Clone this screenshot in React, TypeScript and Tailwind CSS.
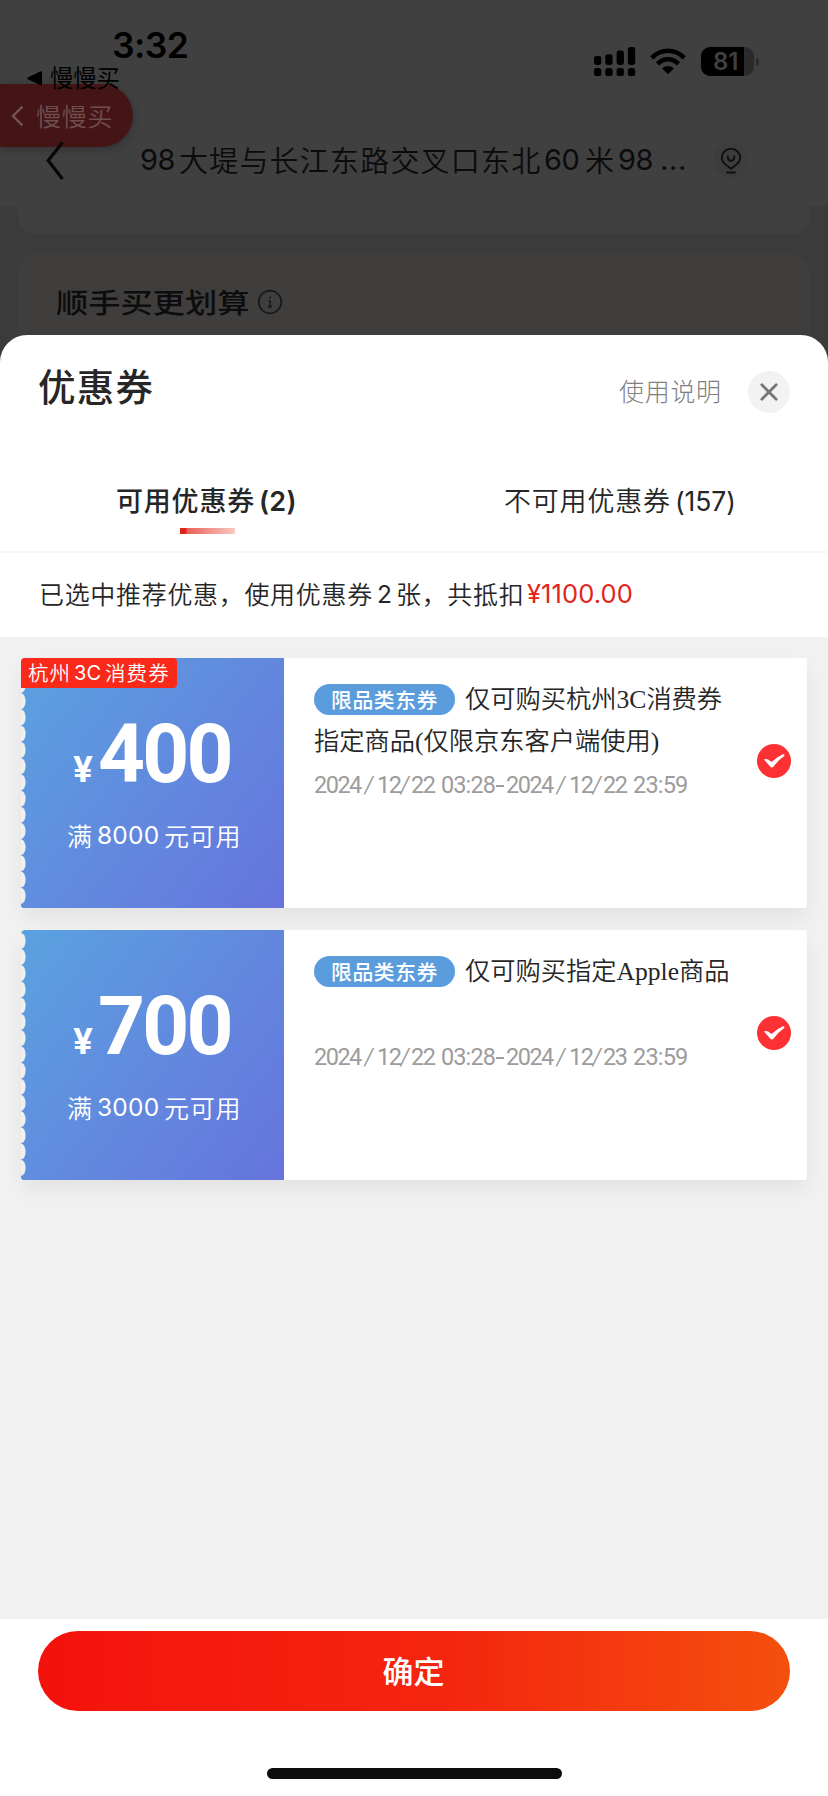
import React from "react";

const SANS = "font-['Noto_Sans_CJK_SC',sans-serif]";
const LATIN = "font-['Inter',sans-serif] leading-none";

function StatusBar() {
  return (
    <div className="flex h-[100px] justify-between text-black">
      <div className="flex flex-col">
        <div className="mt-[28px] ml-[112px] h-[36px] font-['Inter',sans-serif] text-[35.5px] leading-[36px] font-semibold tracking-[-0.6px]">
          3:32
        </div>
        <div className="relative z-20 ml-[27px] flex h-[26px] items-center">
          <svg width="15" height="15" viewBox="0 0 15 15" className="mt-[2px]">
            <path d="M0.8 6.6 13 0.4Q15 -0.2 15 1.6V13Q15 14.8 13.2 14L0.8 8.2Q-0.2 7.4 0.8 6.6Z" fill="#000" />
          </svg>
          <span className="ml-[8px] text-[23.3px] leading-[24px] whitespace-nowrap">慢慢买</span>
        </div>
      </div>
      <div className="mt-[47px] mr-[69px] flex h-[30px] items-start">
        <svg width="42" height="30" viewBox="0 0 42 30" fill="#000">
          <rect x="0" y="9" width="7.3" height="9" rx="2.4" />
          <rect x="11.3" y="7.2" width="7.3" height="10.8" rx="2.4" />
          <rect x="22.6" y="3.6" width="7.3" height="14.4" rx="2.4" />
          <rect x="33.9" y="0" width="7.3" height="18" rx="2.4" />
          <rect x="0" y="21" width="7.3" height="8" rx="2.6" />
          <rect x="11.3" y="21" width="7.3" height="8" rx="2.6" />
          <rect x="22.6" y="21" width="7.3" height="8" rx="2.6" />
          <rect x="33.9" y="21" width="7.3" height="8" rx="2.6" />
        </svg>
        <svg width="36" height="28" viewBox="0 0 36 28" className="ml-[14px]" fill="none" stroke="#000" strokeWidth="4.6">
          <path d="M1.8 10.8C11 1.4 25 1.4 34.2 10.8" />
          <path d="M7.6 16.8C13.6 10.8 22.4 10.8 28.4 16.8" />
          <path d="M12.2 21.4C15.6 18.2 20.4 18.2 23.8 21.4L19 26.2Q18 27.2 17 26.2Z" fill="#000" stroke="none" />
        </svg>
        <div className="ml-[15px] flex h-[29px] items-center">
          <div className="flex h-[29px] w-[53px] items-center overflow-hidden rounded-[9px] bg-[linear-gradient(90deg,#000_43px,#2b2b2b_43px)] pl-[12px]">
            <span className="font-['Inter',sans-serif] text-[24px] leading-[29px] font-semibold text-[#404040]">81</span>
          </div>
          <div className="ml-[2px] h-[8px] w-[3px] rounded-r-full bg-[#2b2b2b]" />
        </div>
      </div>
    </div>
  );
}

function AddressBar() {
  return (
    <div className="flex h-[106px] items-start">
      <svg width="19" height="40" viewBox="0 0 19 40" className="relative z-20 mt-[41px] ml-[46px]" fill="none" stroke="#070707" strokeWidth="3.2">
        <path d="M16.5 1.5 2.2 19.5 16.5 38" />
      </svg>
      <div className="mt-[39px] ml-[75px] flex h-[40px] w-[570px] items-center text-[29px] leading-[40px] font-[350] tracking-[1.2px] whitespace-nowrap text-[#0b0b0d]">
        <span className={`${LATIN} w-[39px] text-[29px] font-normal tracking-[-0.6px]`}>98</span>
        <span className="w-[363px]">大堤与长江东路交叉口东北</span>
        <span className={`${LATIN} w-[43px] pl-[2px] text-[29px] font-normal tracking-[-0.4px]`}>60</span>
        <span className="w-[33px]">米</span>
        <span className={`${LATIN} w-[42px] text-[29px] font-normal tracking-[-0.4px]`}>98</span>
        <span className={`${LATIN} text-[29px] font-normal tracking-[0.6px]`}>...</span>
      </div>
      <div className="mt-[43px] ml-[3px] flex size-[35px] items-center justify-center rounded-full bg-[#3d3d3d]">
        <svg width="22" height="26" viewBox="0 0 22 26" fill="none" stroke="#101010" strokeWidth="2">
          <path d="M11 20.6C8 18.2 1.8 15.6 1.8 10a9.2 9.2 0 0 1 18.4 0C20.2 15.6 14 18.2 11 20.6Z" />
          <path d="M7.8 7.6v2a3.2 3.2 0 0 0 6.4 0V7.6M6.4 24.6h9.2" />
        </svg>
      </div>
    </div>
  );
}

function Backdrop() {
  return (
    <div className="relative h-[375px] shrink-0 bg-[#3b3b3b]">
      <div className="h-[206px] bg-[#404040]">
        <StatusBar />
        <AddressBar />
      </div>
      <div className="mx-[18px] h-[28px] rounded-b-[18px] bg-[#404040]" />
      <div className="mx-[18px] mt-[20px] h-[121px] rounded-t-[18px] bg-[#403d3d] pt-[27px] pl-[38px]">
        <div className="flex h-[40px] items-center">
          <span className="w-[194px]">
            <span className="inline-block origin-left scale-x-[1.16] text-[27.8px] leading-[40px] font-medium whitespace-nowrap text-[#0d0d0d]">
              顺手买更划算
            </span>
          </span>
          <svg width="26" height="26" viewBox="0 0 26 26" className="mt-[2px] ml-[7px]" fill="none" stroke="#181818" strokeWidth="1.7">
            <circle cx="13" cy="13" r="11.3" />
            <path d="M13 7.4v2.2M11.4 12h1.8v5.2M11 17.6h4" strokeWidth="1.6" />
          </svg>
        </div>
      </div>
      <div className="absolute top-[84px] left-0 z-10 flex h-[63px] w-[133px] items-center rounded-r-full bg-[#451516] shadow-[0_2px_8px_rgba(0,0,0,0.25)]">
        <svg width="13" height="22" viewBox="0 0 13 22" className="ml-[11px]" fill="none" stroke="#755454" strokeWidth="2.4">
          <path d="M11.5 1.5 2 11l9.5 9.5" />
        </svg>
        <span className="mb-[2px] ml-[12px] text-[25px] leading-[36px] font-[350] tracking-[0.7px] whitespace-nowrap text-[#6f4e4e]">慢慢买</span>
      </div>
    </div>
  );
}

const scallops = Array.from({ length: 15 }, (_, i) => 10.8 + i * 16.22);

interface Coupon {
  tag?: React.ReactNode;
  amount: string;
  threshold: string;
  title: React.ReactNode;
  end: string;
}

function Serif({ children }: { children: React.ReactNode }) {
  return <span className="font-['Liberation_Serif',serif] text-[25.6px] leading-none font-normal">{children}</span>;
}

function DateText({ end }: { end: string }) {
  return (
    <div className="flex h-[24px] items-center font-['Roboto',sans-serif] text-[23.5px] leading-[24px] font-normal tracking-[-1.5px] whitespace-pre text-[#9c9c9c]">
      <span className="w-[49px]">2024</span>
      <span className="w-[14px] origin-left scale-x-[1.3] font-light">/</span>
      <span className="w-[22px]">12</span>
      <span className="w-[12px] origin-left scale-x-[1.3] font-light">/</span>
      <span className="w-[30px]">22</span>
      <span className="w-[55px] tracking-[-0.9px]">03:28</span>
      <span className="w-[10px]">
        <span className="inline-block w-[8px] border-t-2 border-[#9c9c9c] align-middle" />
      </span>
      <span className="w-[49px]">2024</span>
      <span className="w-[14px] origin-left scale-x-[1.3] font-light">/</span>
      <span className="w-[22px]">12</span>
      <span className="w-[12px] origin-left scale-x-[1.3] font-light">/</span>
      <span className="w-[30px]">{end}</span>
      <span className="tracking-[-0.8px]">23:59</span>
    </div>
  );
}

function CouponCard({ tag, amount, threshold, title, end }: Coupon) {
  return (
    <div className="relative flex h-[250.5px] w-[786px] shrink-0 rounded-[3px] bg-white shadow-[0_10px_20px_rgba(0,0,0,0.06)]">
      <div className="relative flex w-[263px] flex-col items-center bg-[linear-gradient(128deg,#5aa2e0_0%,#6288de_55%,#6674dc_100%)] text-white">
        <svg width="5" height="251" viewBox="0 0 5 251" className="absolute top-0 left-0" fill="#f0f0f0">
          <path d="M0 0H3Q1 1 0 3ZM0 251H3Q1 250 0 248Z" />
          {scallops.map((cy) => (
            <ellipse key={cy} cx="0" cy={cy} rx="4.6" ry="7.9" />
          ))}
        </svg>
        {tag && (
          <div className="absolute top-0 left-0 flex h-[30px] w-[156px] items-center rounded-[4px] rounded-bl-none bg-[#fa2a1b] pb-[1px] pl-[7px] text-[20.5px] leading-[28px] font-[350] tracking-[1.1px] whitespace-nowrap">
            {tag}
          </div>
        )}
        <div className="mt-[55px] flex h-[82px] w-full items-baseline pl-[52px] font-['Roboto',sans-serif] leading-[82px] font-bold">
          <span className="w-[25px] font-['Inter',sans-serif] text-[35px] leading-none tracking-[-0.5px]">¥</span>
          <span className="text-[82px] tracking-[-2.8px]">{amount}</span>
        </div>
        <div className="mt-[22px] flex h-[36px] w-full items-center pl-[46px] text-[25px] leading-[36px] font-[350] tracking-[0.7px] whitespace-nowrap">
          <span className="w-[30px]">满</span>
          <span className={`${LATIN} mt-[2px] w-[67px] text-[24.5px] font-normal tracking-[0.2px]`}>{threshold}</span>
          <span>元可用</span>
        </div>
      </div>
      <div className="pt-[18px] pl-[30px]">
        <div className="h-[84px] w-[440px] text-[25.25px] leading-[42px] font-[350] whitespace-nowrap text-[#262626]">
          <span className="relative -top-[1px] mr-[10px] inline-flex h-[31px] w-[141px] items-center justify-center rounded-full bg-[#5b9ddc] pb-[1px] align-middle text-[20.8px] leading-[30px] font-medium tracking-[0.6px] text-white">
            限品类东券
          </span>
          {title}
        </div>
        <div className="mt-[13px]">
          <DateText end={end} />
        </div>
      </div>
      <svg width="34" height="34" viewBox="0 0 34 34" className="absolute top-[86px] left-[736px]">
        <circle cx="17" cy="17" r="17" fill="#fc3134" />
        <path d="M7 15.6Q9.2 14.2 11.4 15.8L14.6 18Q19.6 12.8 26 10.2Q28.2 10 27.2 12Q21.4 16 16.6 22.6Q14.9 24.4 13.2 22.6Z" fill="#fff" />
      </svg>
    </div>
  );
}

export default function App() {
  return (
    <div className={`flex h-[1796px] w-[828px] flex-col overflow-hidden bg-white ${SANS}`}>
      <Backdrop />
      <div className="relative z-30 -mt-[40px] flex grow flex-col overflow-hidden rounded-t-[27px] bg-white">
        <div className="flex h-[114px] shrink-0 items-start pl-[38px]">
          <h2 className="mt-[23px] w-[581px] text-[37.5px] leading-[54px] font-medium tracking-[1.2px] text-[#262626]">优惠券</h2>
          <span className="mt-[37px] w-[129px] text-[25px] leading-[36px] font-light tracking-[0.7px] whitespace-nowrap text-[#808080]">使用说明</span>
          <button className="mt-[36px] flex size-[42px] items-center justify-center rounded-full bg-[#f2f2f2]">
            <svg width="18" height="18" viewBox="0 0 18 18" fill="none" stroke="#777" strokeWidth="2.8" strokeLinecap="round">
              <path d="M1.8 1.8 16.2 16.2M16.2 1.8 1.8 16.2" />
            </svg>
          </button>
        </div>
        <div className="flex h-[103.5px] shrink-0 border-b-2 border-[#f6f6f6] text-[27px] leading-[38px] tracking-[0.8px] whitespace-nowrap text-[#262626]">
          <div className="flex w-[414px] flex-col pt-[32px]">
            <div className="flex h-[38px] items-center pl-[116px] font-medium">
              <span className="w-[143px]">可用优惠券</span>
              <span className={`${LATIN} mt-[2px] text-[27px] font-semibold tracking-[0.3px]`}>(2)</span>
            </div>
            <div className="mt-[8.5px] ml-[180px] h-[6px] w-[55px] bg-[linear-gradient(90deg,#dd2118_0,#e2271e_6px,#ea6258_7px,#f8c9c5_100%)]" />
          </div>
          <div className="flex h-[71px] items-start pt-[32px] pl-[90px] font-[350]">
            <div className="flex h-[38px] items-center">
              <span className="w-[171px]">不可用优惠券</span>
              <span className={`${LATIN} mt-[2px] text-[26.5px] font-normal tracking-[-0.1px]`}>(157)</span>
            </div>
          </div>
        </div>
        <div className="flex h-[84px] shrink-0 items-center pb-[3px] pl-[39px] text-[25px] leading-[36px] font-[350] tracking-[0.68px] whitespace-nowrap text-[#262626]">
          <span className="w-[338px]">已选中推荐优惠，使用优惠券</span>
          <span className={`${LATIN} mt-[2px] w-[19px] text-[24.5px] font-normal`}>2</span>
          <span className="w-[131px]">张，共抵扣</span>
          <span className={`${LATIN} mt-[2px] text-[25.5px] font-normal tracking-[0.1px] text-[#e1251b]`}>¥1100.00</span>
        </div>
        <div className="flex h-[982.5px] shrink-0 flex-col gap-[21.5px] bg-[#f1f1f1] pt-[21px] pl-[21px]">
          <CouponCard
            tag={
              <>
                <span className="w-[45px]">杭州</span>
                <span className={`${LATIN} mt-[2px] w-[32px] pl-[1px] text-[20px] font-normal tracking-[0.2px]`}>3C</span>
                <span>消费券</span>
              </>
            }
            amount="400"
            threshold="8000"
            end="22"
            title={<>仅可购买杭州<Serif>3C</Serif>消费券<br />指定商品<Serif>(</Serif>仅限京东客户端使用<Serif>)</Serif></>}
          />
          <CouponCard amount="700" threshold="3000" end="23" title={<>仅可购买指定<Serif>Apple</Serif>商品</>} />
        </div>
        <div className="flex grow flex-col items-center bg-white pt-[12px]">
          <button className="flex h-[80px] w-[752px] shrink-0 items-center justify-center rounded-full bg-[linear-gradient(90deg,#f4120c_0%,#f4260f_55%,#f4500d_100%)] pr-[1px] pb-[2px] text-[31px] leading-[44px] font-medium text-white">
            确定
          </button>
          <div className="mt-[57px] h-[11px] w-[295px] shrink-0 rounded-full bg-[#0c0c0c]" />
        </div>
      </div>
    </div>
  );
}
